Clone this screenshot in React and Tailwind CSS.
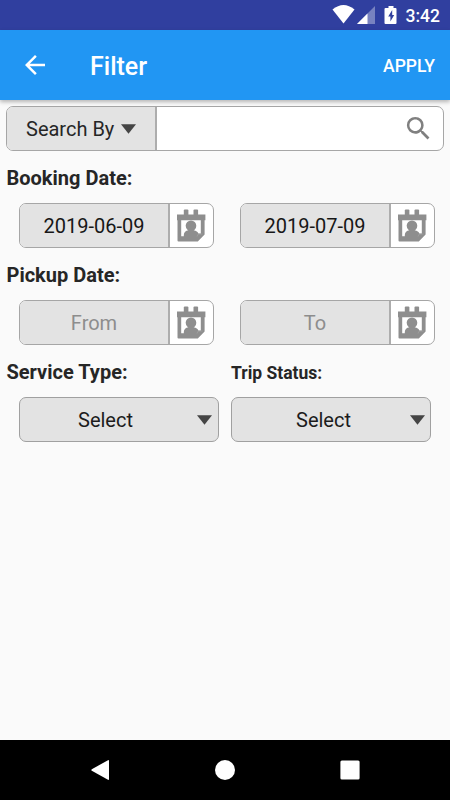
function CalendarIcon() {
  return (
    <svg className="mb-px mr-px block h-[34px] w-[30px]" viewBox="0 0 30 34" fill="#8e8e8e">
      <rect x="7.8" y="1.500" width="4.600" height="7" rx="1" />
      <rect x="17.500" y="1.500" width="4.600" height="7" rx="1" />
      <path
        fillRule="evenodd"
        d="M1 6.500h28.400v5.800H28.600v14.200l-6.800 7H2.500q-1 0-1-1V12.300H1ZM5.200 12.300V28.300H24.800V12.300Z"
      />
      <circle cx="15" cy="17.800" r="5.300" />
      <path d="M7.800 29v-2c0-2.500 2-4.200 4.500-4.700V20h5.400v2.300c2.500.3 4.200 1.700 4.600 3.200H26V29Z" />
      <path d="M21 28.500l1-2.300 4.500-.2" fill="none" stroke="#a6a6a6" strokeWidth=".6" />
    </svg>
  );
}

function DateField({ value, placeholder, className }) {
  return (
    <div className={`flex h-[45px] w-[195px] overflow-hidden rounded-[7px] border border-[#a6a6a6] bg-white ${className}`}>
      <div
        className={`flex w-[150px] items-center justify-center border-r-2 border-[#adadad] bg-[#e3e3e3] pt-px text-xl ${
          value ? "text-[#171717]" : "text-[#8d8d8d]"
        }`}
      >
        {value || placeholder}
      </div>
      <div className="flex flex-1 items-center justify-center">
        <CalendarIcon />
      </div>
    </div>
  );
}

function Caret() {
  return (
    <svg className="block h-[10px] w-[15px]" viewBox="0 0 15 10">
      <path d="M0 .3h15L7.500 9.700Z" fill="#454545" />
    </svg>
  );
}

function SelectField({ className, labelClass }) {
  return (
    <div className={`flex h-[45px] w-[200px] items-center rounded-[7px] border border-[#a0a0a0] bg-[#e3e3e3] pt-px ${className}`}>
      <span className={`flex-1 text-xl text-[#1c1c1c] ${labelClass}`}>Select</span>
      <Caret />
    </div>
  );
}

export default function App() {
  return (
    <div className="flex h-[800px] w-[450px] flex-col overflow-hidden bg-[#fafafa] font-['Roboto',sans-serif] text-[#262626]">
      <div className="flex h-[30px] shrink-0 items-center justify-end bg-[#303f9f] pr-[10px] text-white">
        <svg className="h-[30px] w-[68px]" viewBox="0 0 68 30" fill="#fff">
          <path d="M.5 9.500Q11.500 .5 22.500 9.500L11.500 23.500Z" />
          <path d="M43 6v18H25Z" opacity=".35" />
          <path d="M35.500 13.500V24H25Z" />
          <path
            fillRule="evenodd"
            d="M56.500 6h5v2h2q1 0 1 1v14q0 1-1 1H53.500q-1 0-1-1V9q0-1 1-1h3Zm3.700 4-4 6.500h2.200v5l3.800-6.500h-2Z"
          />
        </svg>
        <span className="ml-[6px] mt-[2px] text-[17.5px] font-medium leading-[28px]">3:42</span>
      </div>

      <header className="z-10 flex h-[70px] shrink-0 items-center bg-[#2196f3] pl-[20px] pr-[15px] text-white shadow-[0_2px_4px_rgba(0,0,0,0.28)]">
        <svg className="h-[30px] w-[30px]" viewBox="0 0 24 24" fill="#fff">
          <path d="M20 11H7.830l5.590-5.590L12 4l-8 8 8 8 1.410-1.410L7.830 13H20v-2z" />
        </svg>
        <h1 className="ml-[40px] mt-[3px] flex-1 text-[25px] font-medium leading-[30px]">Filter</h1>
        <button className="mt-[2px] text-[17.5px] font-medium">APPLY</button>
      </header>

      <main className="flex-1 pt-[6px]">
        <div className="mx-[6px] flex h-[45px] overflow-hidden rounded-[7px] border border-[#a6a6a6] bg-white">
          <div className="flex w-[150px] items-center border-r-2 border-[#adadad] bg-[#e3e3e3] pl-[19px] pt-px text-xl text-[#262626]">
            Search By
            <span className="ml-[7px]">
              <Caret />
            </span>
          </div>
          <div className="flex flex-1 items-center justify-end pr-[9px]">
            <svg className="h-[31px] w-[31px]" viewBox="0 0 24 24" fill="#808080">
              <path d="M15.500 14h-.79l-.28-.27A6.471 6.471 0 0 0 16 9.500 6.500 6.500 0 1 0 9.500 16c1.610 0 3.090-.59 4.230-1.570l.27.28v.79l5 4.990L20.490 19l-4.990-5zm-6 0C7.010 14 5 11.990 5 9.500S7.010 5 9.500 5 14 7.010 14 9.500 11.990 14 9.500 14z" />
            </svg>
          </div>
        </div>

        <div className="flex h-[52px] items-center pl-[6.5px] pt-[2px] text-xl font-bold">Booking Date:</div>
        <div className="flex">
          <DateField value="2019-06-09" className="ml-[19px]" />
          <DateField value="2019-07-09" className="ml-[26px]" />
        </div>

        <div className="flex h-[52px] items-center pl-[6.5px] pt-[2px] text-xl font-bold">Pickup Date:</div>
        <div className="flex">
          <DateField placeholder="From" className="ml-[19px]" />
          <DateField placeholder="To" className="ml-[26px]" />
        </div>

        <div className="flex h-[52px] items-center pt-[2px] font-bold">
          <div className="w-[231px] pl-[6.5px] text-xl">Service Type:</div>
          <div className="pt-[3px] text-[17.5px]">Trip Status:</div>
        </div>
        <div className="flex">
          <SelectField className="ml-[19px] pr-[6px]" labelClass="pl-[58px]" />
          <SelectField className="ml-[12px] pr-[5px]" labelClass="pl-[64px]" />
        </div>
      </main>

      <nav className="flex h-[60px] shrink-0 items-center justify-between bg-black pl-[91px] pr-[90px]">
        <svg className="h-5 w-[18px]" viewBox="0 0 18 20" fill="#fff">
          <path d="M17 .2Q18-.2 18 1v18q0 1.200-1 .8L.8 10.800Q-.2 10 .8 9.200Z" />
        </svg>
        <div className="size-5 rounded-full bg-white" />
        <svg className="size-5" viewBox="0 0 20 20" fill="#fff">
          <rect x=".4" y=".4" width="19.200" height="19.200" rx="1.500" />
        </svg>
      </nav>
    </div>
  );
}
